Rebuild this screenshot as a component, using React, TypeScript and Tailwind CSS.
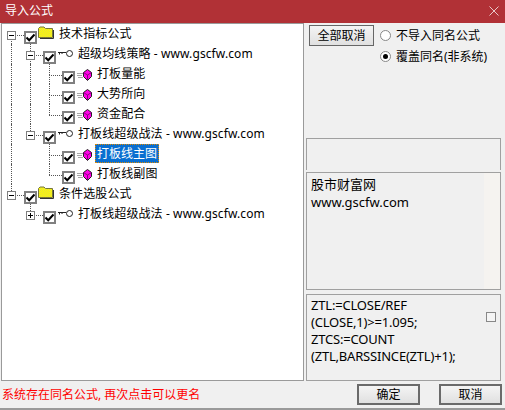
import { FC } from 'react';

const uiFont = "font-['Tahoma','Noto_Sans','Noto_Sans_CJK_SC',sans-serif]";

interface RowItem {
  level: number;
  label: string;
  icon: 'folder' | 'key' | 'gem';
  expander?: 'minus' | 'plus';
  guides: number[];
  last?: boolean;
  first?: boolean;
  selected?: boolean;
}

const rows: RowItem[] = [
  { level: 0, label: '技术指标公式', icon: 'folder', expander: 'minus', guides: [], first: true },
  { level: 1, label: '超级均线策略 - www.gscfw.com', icon: 'key', expander: 'minus', guides: [0] },
  { level: 2, label: '打板量能', icon: 'gem', guides: [0, 1] },
  { level: 2, label: '大势所向', icon: 'gem', guides: [0, 1] },
  { level: 2, label: '资金配合', icon: 'gem', guides: [0, 1], last: true },
  { level: 1, label: '打板线超级战法 - www.gscfw.com', icon: 'key', expander: 'minus', guides: [0], last: true },
  { level: 2, label: '打板线主图', icon: 'gem', guides: [0], selected: true },
  { level: 2, label: '打板线副图', icon: 'gem', guides: [0], last: true },
  { level: 0, label: '条件选股公式', icon: 'folder', expander: 'minus', guides: [], last: true },
  { level: 1, label: '打板线超级战法 - www.gscfw.com', icon: 'key', expander: 'plus', guides: [], last: true },
];

const Check: FC = () => (
  <span className="mt-[6px] ml-[3px] flex h-[13px] w-[13px] shrink-0 items-center justify-center border-2 border-[#808080] bg-white">
    <svg width="9" height="9" viewBox="0 0 9 9">
      <path d="M0.5 4.5 L3.2 7.2 L8.5 1.5" fill="none" stroke="#000" strokeWidth="2" />
    </svg>
  </span>
);

const FolderIcon: FC = () => (
  <svg width="16" height="13" viewBox="0 0 16 13" className="ml-px -mt-[3px] shrink-0">
    <defs>
      <pattern id="dither" width="2" height="2" patternUnits="userSpaceOnUse">
        <rect width="2" height="2" fill="#ffff00" />
        <rect width="1" height="1" fill="#e4dc40" />
        <rect x="1" y="1" width="1" height="1" fill="#e4dc40" />
      </pattern>
    </defs>
    <path d="M0.5 11.5 V2.5 L2 1 H6 L7.5 2.5 H14.5 V11.5 Z" fill="url(#dither)" stroke="#77773a" />
    <path d="M15.5 4 V12.5 H2" fill="none" stroke="#333" />
  </svg>
);

const KeyIcon: FC = () => (
  <svg width="15" height="9" viewBox="0 0 15 9" className="ml-[2px] -mt-[2px] shrink-0">
    <circle cx="11.5" cy="4.5" r="3" fill="#fff" stroke="#222" />
    <path d="M0 3.5 H8 M1.5 3.5 V5.5 M4 3.5 V5" stroke="#222" fill="none" />
  </svg>
);

const GemIcon: FC = () => (
  <svg width="15" height="12" viewBox="0 0 15 12" className="ml-[2px] mt-px shrink-0">
    <path d="M0 4.5 H6 M0 6.5 H5 M1 8.5 H6" stroke="#a8a8a8" fill="none" />
    <path d="M10.5 0.5 L14.5 3.5 V7.5 L10.5 11.5 L6.5 7.5 V3.5 Z" fill="#ff00e6" stroke="#222" />
    <path d="M6.5 3.5 L10.5 6 L14.5 3.5 M10.5 6 V11" stroke="#8a0080" fill="none" />
  </svg>
);

const Expander: FC<{ kind: 'minus' | 'plus' }> = ({ kind }) => (
  <span className="relative z-10 mt-[2px] flex h-[9px] w-[9px] items-center justify-center border border-[#7f7f7f] bg-white">
    <span className="h-px w-[5px] bg-black" />
    {kind === 'plus' && <span className="absolute h-[5px] w-px bg-black" />}
  </span>
);

const TreeRow: FC<{ item: RowItem }> = ({ item }) => {
  return (
    <div className="flex h-5 items-center">
      {Array.from({ length: item.level }).map((_, i) => (
        <span key={i} className="flex h-full w-[19px] shrink-0 justify-center pr-px">
          {item.guides.includes(i) && <span className="h-full border-l border-dotted border-[#555]" />}
        </span>
      ))}
      <span className="relative flex h-full w-[19px] shrink-0 items-center justify-center pr-px">
        {!item.first && <span className="absolute left-[9px] top-0 h-[11px] border-l border-dotted border-[#555]" />}
        {!item.last && <span className="absolute bottom-0 left-[9px] h-[9px] border-l border-dotted border-[#555]" />}
        <span className="absolute left-[9px] right-[-3px] top-[11px] border-t border-dotted border-[#555]" />
        {item.expander && <Expander kind={item.expander} />}
      </span>
      <Check />
      {item.icon === 'folder' && <FolderIcon />}
      {item.icon === 'key' && <KeyIcon />}
      {item.icon === 'gem' && <GemIcon />}
      {item.selected ? (
        <span className="ml-[3px] -mt-[1px] flex h-[19px] items-center border border-dotted border-[#e08a00] bg-[#0a6fd0] px-px text-white">
          {item.label}
        </span>
      ) : (
        <span className="ml-[4px] -mt-[1px] whitespace-pre px-px tracking-[0.1px] text-black">{item.label}</span>
      )}
    </div>
  );
};

const Radio: FC<{ checked?: boolean; label: string }> = ({ checked, label }) => (
  <div className="flex h-[21px] items-center">
    <span className="flex h-[11px] w-[11px] items-center justify-center rounded-full border border-[#888] bg-white">
      {checked && <span className="h-[5px] w-[5px] rounded-full bg-black" />}
    </span>
    <span className="ml-[5px] text-black">{label}</span>
  </div>
);

const DialogButton: FC<{ label: string; className?: string }> = ({ label, className }) => (
  <button
    className={`flex items-center justify-center bg-gradient-to-b from-[#f4f4f4] to-[#e0e0e0] text-black ${className ?? ''}`}
  >
    {label}
  </button>
);

export default function App() {
  return (
    <div className={`flex h-[410px] w-[505px] flex-col overflow-hidden border-b-2 border-[#9a9a9a] bg-[#f0f0f0] text-[12px] leading-[20px] ${uiFont}`}>
      <div className="flex h-[23px] shrink-0 items-center justify-between bg-[#b13136] pl-[5px] pr-[6px] text-white">
        <span className="-mt-[2px]">导入公式</span>
        <svg width="10" height="10" viewBox="0 0 10 10" className="-mt-[2px]">
          <path d="M0.5 0.5 L9.5 9.5 M9.5 0.5 L0.5 9.5" stroke="#e8c8c8" fill="none" />
        </svg>
      </div>

      <div className="flex h-[358px] shrink-0 pl-px">
        <div className="h-full w-[303px] shrink-0 border border-[#9a9a9a] bg-white">
          {rows.map((item) => (
            <TreeRow key={item.label + item.level + item.guides.length} item={item} />
          ))}
        </div>

        <div className="ml-[2px] flex w-[195px] shrink-0 flex-col">
          <div className="flex h-[115px] shrink-0 pt-[2px]">
            <DialogButton label="全部取消" className="ml-[3px] h-[21px] w-[65px] border border-[#666]" />
            <div className="ml-[6px] -mt-px flex flex-col pt-px">
              <Radio label="不导入同名公式" />
              <Radio checked label="覆盖同名(非系统)" />
            </div>
          </div>
          <div className="h-[32px] shrink-0 border-x border-t border-[#a0a0a0]" />
          <div className="mt-[2px] h-[118px] shrink-0 border border-[#a0a0a0] bg-[linear-gradient(to_right,#f0f0f0_177px,#f5f3f0_177px)] pl-[4px] pt-[2px] text-[13px] leading-[18px] text-black">
            <div>股市财富网</div>
            <div>www.gscfw.com</div>
          </div>
          <div className="relative mt-[4px] h-[87px] shrink-0 border border-[#a0a0a0] pl-[4px] pt-[2px] text-[13px] leading-[17px] tracking-[-0.2px] text-black">
            <div>ZTL:=CLOSE/REF</div>
            <div>(CLOSE,1)&gt;=1.095;</div>
            <div>ZTCS:=COUNT</div>
            <div>(ZTL,BARSSINCE(ZTL)+1);</div>
            <span className="absolute right-[4px] top-[17px] h-[10px] w-[10px] border border-[#888] bg-[#f5f5f5]" />
          </div>
        </div>
      </div>

      <div className="flex min-h-0 flex-1 items-center pl-[2px] pr-[3px]">
        <span className="text-[#ff0000]">系统存在同名公式, 再次点击可以更名</span>
        <DialogButton label="确定" className="ml-auto h-[21px] w-[63px] border-2 border-[#6a6a6a]" />
        <DialogButton label="取消" className="ml-[19px] h-[21px] w-[63px] border-2 border-[#6a6a6a]" />
      </div>
    </div>
  );
}
